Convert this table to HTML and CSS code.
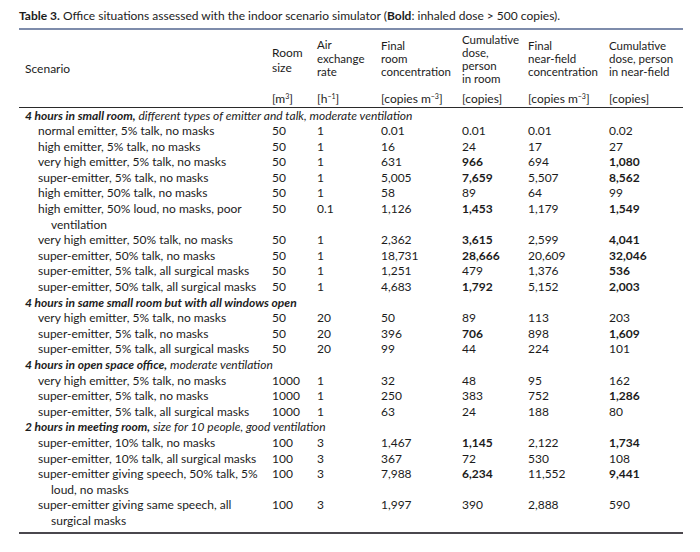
FILE: index.html
```html
<!DOCTYPE html>
<html>
<head>
<meta charset="utf-8">
<link rel="stylesheet" href="styles.css">
</head>
<body>
<p class="caption"><b>Table 3.</b> Office situations assessed with the indoor scenario simulator (<b>Bold</b>: inhaled dose &gt; 500 copies).</p>
<table class="tbl">
<colgroup>
<col class="c-scn"><col class="c-room"><col class="c-air"><col class="c-fin"><col class="c-cum"><col class="c-nf"><col class="c-cnf">
</colgroup>
<thead>
<tr class="hd">
<th class="h-scn">Scenario</th>
<th class="h-room">Room<br>size</th>
<th class="h-air">Air<br>exchange<br>rate</th>
<th class="h-fin">Final<br>room<br>concentration</th>
<th class="h-cum">Cumulative<br>dose,<br>person<br>in room</th>
<th class="h-fin">Final<br>near-field<br>concentration</th>
<th class="h-fin">Cumulative<br>dose, person<br>in near-field</th>
</tr>
<tr class="units">
<th></th>
<th>[m<sup>3</sup>]</th>
<th>[h<sup>−1</sup>]</th>
<th>[copies m<sup>−3</sup>]</th>
<th>[copies]</th>
<th>[copies m<sup>−3</sup>]</th>
<th>[copies]</th>
</tr>
</thead>
<tbody>
<tr class="sec"><td colspan="7"><b>4 hours in small room,</b> different types of emitter and talk, moderate ventilation</td></tr>
<tr><td class="scn">normal emitter, 5% talk, no masks</td><td>50</td><td>1</td><td>0.01</td><td>0.01</td><td>0.01</td><td>0.02</td></tr>
<tr><td class="scn">high emitter, 5% talk, no masks</td><td>50</td><td>1</td><td>16</td><td>24</td><td>17</td><td>27</td></tr>
<tr><td class="scn">very high emitter, 5% talk, no masks</td><td>50</td><td>1</td><td>631</td><td class="b">966</td><td>694</td><td class="b">1,080</td></tr>
<tr><td class="scn">super-emitter, 5% talk, no masks</td><td>50</td><td>1</td><td>5,005</td><td class="b">7,659</td><td>5,507</td><td class="b">8,562</td></tr>
<tr><td class="scn">high emitter, 50% talk, no masks</td><td>50</td><td>1</td><td>58</td><td>89</td><td>64</td><td>99</td></tr>
<tr><td class="scn">high emitter, 50% loud, no masks, poor ventilation</td><td>50</td><td>0.1</td><td>1,126</td><td class="b">1,453</td><td>1,179</td><td class="b">1,549</td></tr>
<tr><td class="scn">very high emitter, 50% talk, no masks</td><td>50</td><td>1</td><td>2,362</td><td class="b">3,615</td><td>2,599</td><td class="b">4,041</td></tr>
<tr><td class="scn">super-emitter, 50% talk, no masks</td><td>50</td><td>1</td><td>18,731</td><td class="b">28,666</td><td>20,609</td><td class="b">32,046</td></tr>
<tr><td class="scn">super-emitter, 5% talk, all surgical masks</td><td>50</td><td>1</td><td>1,251</td><td>479</td><td>1,376</td><td class="b">536</td></tr>
<tr><td class="scn">super-emitter, 50% talk, all surgical masks</td><td>50</td><td>1</td><td>4,683</td><td class="b">1,792</td><td>5,152</td><td class="b">2,003</td></tr>
<tr class="sec"><td colspan="7"><b>4 hours in same small room but with all windows open</b></td></tr>
<tr><td class="scn">very high emitter, 5% talk, no masks</td><td>50</td><td>20</td><td>50</td><td>89</td><td>113</td><td>203</td></tr>
<tr><td class="scn">super-emitter, 5% talk, no masks</td><td>50</td><td>20</td><td>396</td><td class="b">706</td><td>898</td><td class="b">1,609</td></tr>
<tr><td class="scn">super-emitter, 5% talk, all surgical masks</td><td>50</td><td>20</td><td>99</td><td>44</td><td>224</td><td>101</td></tr>
<tr class="sec"><td colspan="7"><b>4 hours in open space office,</b> moderate ventilation</td></tr>
<tr><td class="scn">very high emitter, 5% talk, no masks</td><td>1000</td><td>1</td><td>32</td><td>48</td><td>95</td><td>162</td></tr>
<tr><td class="scn">super-emitter, 5% talk, no masks</td><td>1000</td><td>1</td><td>250</td><td>383</td><td>752</td><td class="b">1,286</td></tr>
<tr><td class="scn">super-emitter, 5% talk, all surgical masks</td><td>1000</td><td>1</td><td>63</td><td>24</td><td>188</td><td>80</td></tr>
<tr class="sec"><td colspan="7"><b>2 hours in meeting room,</b> size for 10 people, good ventilation</td></tr>
<tr><td class="scn">super-emitter, 10% talk, no masks</td><td>100</td><td>3</td><td>1,467</td><td class="b">1,145</td><td>2,122</td><td class="b">1,734</td></tr>
<tr><td class="scn">super-emitter, 10% talk, all surgical masks</td><td>100</td><td>3</td><td>367</td><td>72</td><td>530</td><td>108</td></tr>
<tr><td class="scn">super-emitter giving speech, 50% talk, 5% loud, no masks</td><td>100</td><td>3</td><td>7,988</td><td class="b">6,234</td><td>11,552</td><td class="b">9,441</td></tr>
<tr class="last"><td class="scn">super-emitter giving same speech, all surgical masks</td><td>100</td><td>3</td><td>1,997</td><td>390</td><td>2,888</td><td>590</td></tr>
</tbody>
</table>
</body>
</html>
```

FILE: styles.css
```css
html, body {
  margin: 0;
  background: #ffffff;
}
body {
  padding: 7px 17px 0 19px;
  font-family: Lato, "Open Sans", sans-serif;
  font-size: 12px;
  color: #1c1c1c;
}
.caption {
  margin: 0;
  line-height: 17px;
  font-size: 12px;
  height: 21px;
}
.tbl {
  width: 664px;
  border-collapse: collapse;
  table-layout: fixed;
  border-top: 2px solid #7e8cab;
  border-bottom: 2px solid #4a474d;
}
.c-scn { width: 249px; }
.c-room { width: 45px; }
.c-air { width: 64px; }
.c-fin { width: 81px; }
.c-cum { width: 66px; }
.c-nf { width: 81px; }
.c-cnf { width: 78px; }
th {
  font-weight: normal;
  text-align: left;
  vertical-align: top;
  padding: 0 0 0 4px;
  line-height: 13px;
  white-space: nowrap;
}
.hd th {
  height: 59px;
  box-sizing: border-box;
  font-size: 11.5px;
}
.hd th.h-scn,
.hd th.h-room { font-size: 12px; }
.h-scn { padding-top: 32px; padding-left: 6px; }
.h-room { padding-top: 15px; line-height: 15px; }
.h-air { padding-top: 8px; line-height: 13.5px; }
.h-fin { padding-top: 9px; }
.h-cum { padding-top: 3px; }
.units th {
  height: 19px;
  box-sizing: border-box;
  vertical-align: bottom;
  line-height: 15.6px;
  padding-bottom: 0;
}
.units { border-bottom: 1px solid #2a2a2a; }
sup {
  font-size: 7px;
  line-height: 0;
  vertical-align: 4px;
}
td {
  padding: 0 0 0 4px;
  line-height: 15.6px;
  vertical-align: top;
}
.sec td {
  padding-left: 6px;
  font-style: italic;
  white-space: nowrap;
}
.sec b { font-weight: bold; }
td.scn {
  padding-left: 32px;
  padding-right: 2px;
  text-indent: -13px;
}
td.b { font-weight: bold; }
.last td { padding-bottom: 3px; }
```
